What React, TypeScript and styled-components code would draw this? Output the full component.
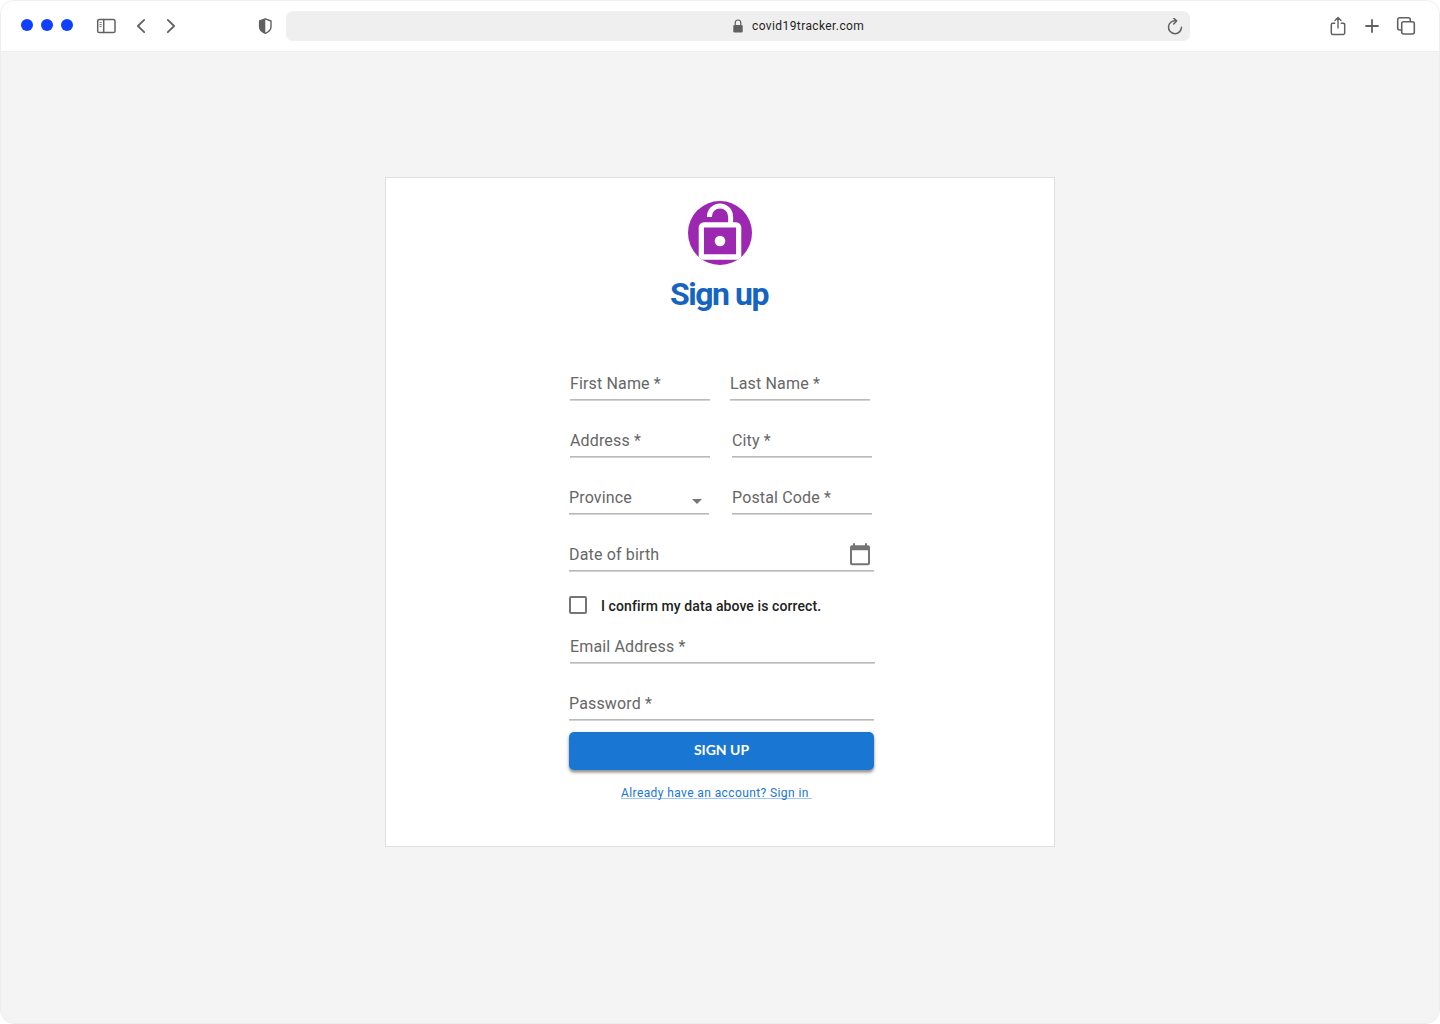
import React from "react";
import styled, { createGlobalStyle } from "styled-components";

const GlobalStyle = createGlobalStyle`
  *, *::before, *::after { box-sizing: border-box; }
  html, body { margin: 0; padding: 0; background: #fff; }
  body { font-family: Roboto, "Liberation Sans", sans-serif; }
  svg { display: block; flex: none; }
`;

const Browser = styled.div`
  width: 1440px;
  height: 1024px;
  display: flex;
  flex-direction: column;
  overflow: hidden;
  border: 1px solid #eeeeee;
  border-radius: 14px;
  background: #f4f4f4;
`;

const Toolbar = styled.header`
  height: 51px;
  flex: none;
  display: flex;
  align-items: center;
  padding: 0 0 1px 20px;
  background: #fff;
  border-bottom: 1px solid #eeeeee;
`;

const Lights = styled.div`
  display: flex;
  gap: 8px;
  margin-right: 23px;
  margin-bottom: 1px;
`;

const Light = styled.span`
  width: 12px;
  height: 12px;
  border-radius: 50%;
  background: #0f3fff;
`;

const ToolIcon = styled.svg<{ $gap?: number }>`
  margin-right: ${(p) => p.$gap ?? 0}px;
  margin-top: 1px;
  fill: none;
  stroke: #616161;
  stroke-width: 1.5;
  stroke-linecap: round;
  stroke-linejoin: round;
`;

const AddressBar = styled.div`
  width: 904px;
  height: 30px;
  margin-right: 138.5px;
  margin-top: 1px;
  padding: 0 6.5px 0 447px;
  display: flex;
  align-items: center;
  border-radius: 7px;
  background: #efefef;
`;

const Url = styled.span`
  flex: 1;
  margin-left: 9px;
  font-size: 12px;
  line-height: 16px;
  letter-spacing: 0.4px;
  color: #1f1f1f;
`;

const Page = styled.main`
  flex: 1;
  padding-top: 125px;
  display: flex;
  justify-content: center;
  align-items: flex-start;
`;

const Card = styled.section`
  width: 670px;
  height: 670px;
  display: flex;
  flex-direction: column;
  align-items: center;
  padding-top: 23px;
  border: 1px solid #e0e0e0;
  background: #fff;
`;

const Title = styled.h1`
  margin: 9px 2px 0 0;
  font-size: 32px;
  line-height: 40px;
  font-weight: 700;
  letter-spacing: -1.5px;
  color: #1565c0;
`;

const Form = styled.form`
  width: 306px;
  margin: 55px 0 0 4px;
  display: flex;
  flex-direction: column;
`;

const Row = styled.div<{ $indent?: number; $gap?: number }>`
  display: flex;
  gap: ${(p) => p.$gap ?? 0}px;
  margin: 0 0 25px ${(p) => p.$indent ?? 0}px;
`;

const Field = styled.label<{ $wide?: boolean }>`
  width: ${(p) => (p.$wide ? 305 : 140)}px;
  height: 32px;
  display: flex;
  justify-content: space-between;
  border-bottom: 1px solid #d3d3d3;
  box-shadow: inset 0 -1px 0 #b9b9b9;
  font-size: 16px;
  line-height: 29px;
  letter-spacing: 0.15px;
  color: #666;
`;

const SelectArrow = styled.svg`
  margin: 16px 7px 0 0;
  fill: #757575;
`;

const CalendarIcon = styled.svg`
  margin: 3px 4px 0 0;
`;

const Confirm = styled.label`
  height: 20px;
  margin: -2px 0 17px;
  display: flex;
  align-items: center;
  gap: 14px;
  font-size: 14px;
  line-height: 18px;
  font-weight: 500;
  letter-spacing: 0.09px;
  color: #212121;
`;

const ConfirmText = styled.span`
  padding-top: 1px;
`;

const Checkbox = styled.span`
  width: 18px;
  height: 18px;
  border: 2px solid #757575;
  border-radius: 2px;
`;

const Submit = styled.button`
  width: 305px;
  height: 38px;
  margin-top: -14px;
  padding: 0 0 3px 0;
  border: 0;
  border-radius: 5px;
  background: #1976d2;
  box-shadow: 0 1px 5px rgba(0, 0, 0, 0.14), 0 2px 2px rgba(0, 0, 0, 0.14),
    0 3px 3px rgba(0, 0, 0, 0.24);
  font-family: Lato, sans-serif;
  font-size: 14px;
  font-weight: 700;
  letter-spacing: 0;
  color: #fff;
`;

const SignInLink = styled.a`
  align-self: flex-start;
  margin: 15px 0 0 52px;
  font-size: 12px;
  line-height: 16px;
  letter-spacing: 0.4px;
  white-space: pre;
  color: #1976d2;
  text-decoration: underline;
  text-decoration-color: #a3c8ed;
  text-decoration-skip-ink: none;
`;

export default function App() {
  return (
    <>
      <GlobalStyle />
      <Browser>
        <Toolbar>
          <Lights>
            <Light />
            <Light />
            <Light />
          </Lights>
          <ToolIcon width="20" height="16" viewBox="0 0 20 16" $gap={20}>
            <rect x="1.700" y="1.500" width="17.300" height="13" rx="1.600" />
            <path d="M7.700 1.500v13" />
            <path d="M3.900 4.500h1.400M3.900 6.500h1.400M3.900 8.500h1.400" strokeWidth="0.800" />
          </ToolIcon>
          <ToolIcon width="10" height="16" viewBox="0 0 10 16" $gap={20}>
            <path d="M8.200 1.900 1.900 8l6.300 6.100" strokeWidth="1.800" />
          </ToolIcon>
          <ToolIcon width="10" height="16" viewBox="0 0 10 16" $gap={82}>
            <path d="M1.800 1.900 8.100 8l-6.300 6.100" strokeWidth="1.800" />
          </ToolIcon>
          <ToolIcon width="14" height="16" viewBox="0 0 14 16" $gap={14}>
            <path d="M7.300 .8 13 3v6c0 3-2.400 4.900-5.700 6.300C4 13.900 1.600 12 1.600 9V3Z" strokeWidth="1.400" />
            <path d="M7.300 .8v14.500C4 13.900 1.600 12 1.600 9V3Z" fill="#616161" stroke="none" />
          </ToolIcon>
          <AddressBar>
            <svg width="10" height="14" viewBox="0 0 10 14">
              <rect x="0.300" y="6" width="9.400" height="7.500" rx="1.300" fill="#616161" />
              <path d="M2.200 6.500V4a2.800 3 0 0 1 5.600 0v2.500" fill="none" stroke="#616161" strokeWidth="1.200" />
            </svg>
            <Url>covid19tracker.com</Url>
            <ToolIcon width="18" height="18" viewBox="0 0 18 18">
              <path d="M9.600 2.700A6.500 6.500 0 1 0 15.500 9.200" strokeWidth="1.500" />
              <path d="M7.700.2l2.900 2.700-2.900 3" strokeWidth="1.500" />
            </ToolIcon>
          </AddressBar>
          <ToolIcon width="18" height="20" viewBox="0 0 18 20" $gap={18}>
            <path d="M5.700 7.200H3.800a1.500 1.500 0 0 0-1.500 1.500v8.300a1.500 1.500 0 0 0 1.500 1.500h10.400a1.500 1.500 0 0 0 1.500-1.500V8.700a1.500 1.500 0 0 0-1.500-1.500h-1.900" />
            <path d="M9 12V2M6 4.500l3-3 3 3" strokeWidth="1.400" />
          </ToolIcon>
          <ToolIcon width="14" height="14" viewBox="0 0 14 14" $gap={17}>
            <path d="M7 1v12M1 7h12" strokeWidth="1.800" />
          </ToolIcon>
          <ToolIcon width="20" height="20" viewBox="0 0 20 20">
            <rect x="5.700" y="5.700" width="12.600" height="12.300" rx="2" strokeWidth="1.600" />
            <path d="M5.500 14H3.700a2 2 0 0 1-2-2V3.700a2 2 0 0 1 2-2h8.600a2 2 0 0 1 2 2v1.800" strokeWidth="1.600" />
          </ToolIcon>
        </Toolbar>
        <Page>
          <Card>
            <svg width="64" height="64" viewBox="0 0 64 64">
              <defs>
                <clipPath id="badge">
                  <circle cx="32" cy="32" r="32" />
                </clipPath>
              </defs>
              <circle cx="32" cy="32" r="32" fill="#9c27b0" />
              <g clipPath="url(#badge)">
                <path d="M21.400 16v-.500a10.600 10.600 0 0 1 21.200 0V24" fill="none" stroke="#fff" strokeWidth="5" />
                <path
                  d="M16 21.300h32a5.300 5.300 0 0 1 5.300 5.300V58.700H10.700V26.600A5.300 5.300 0 0 1 16 21.300ZM16 26.600v26.700h32V26.600Z"
                  fill="#fff"
                  fillRule="evenodd"
                />
              </g>
              <circle cx="32" cy="40" r="5.300" fill="#fff" />
            </svg>
            <Title>Sign up</Title>
            <Form>
              <Row $indent={1} $gap={20}>
                <Field>First Name *</Field>
                <Field>Last Name *</Field>
              </Row>
              <Row $indent={1} $gap={22}>
                <Field>Address *</Field>
                <Field>City *</Field>
              </Row>
              <Row $gap={23}>
                <Field>
                  Province
                  <SelectArrow width="10" height="5" viewBox="0 0 10 5">
                    <path d="M0 0h10L5 5Z" />
                  </SelectArrow>
                </Field>
                <Field>Postal Code *</Field>
              </Row>
              <Row>
                <Field $wide>
                  Date of birth
                  <CalendarIcon width="20" height="23" viewBox="0 0 20 23">
                    <path
                      d="M18 2.300h-1V.3h-2v2H5v-2H3v2H2c-1.100 0-2 .9-2 2v16c0 1.100.9 2 2 2h16c1.100 0 2-.9 2-2v-16c0-1.100-.9-2-2-2Zm0 18H2v-13h16Z"
                      fill="#757575"
                    />
                  </CalendarIcon>
                </Field>
              </Row>
              <Confirm>
                <Checkbox />
                <ConfirmText>I confirm my data above is correct.</ConfirmText>
              </Confirm>
              <Row $indent={1}>
                <Field $wide>Email Address *</Field>
              </Row>
              <Row>
                <Field $wide>Password *</Field>
              </Row>
              <Submit type="button">SIGN UP</Submit>
              <SignInLink>{"Already have an account? Sign in "}</SignInLink>
            </Form>
          </Card>
        </Page>
      </Browser>
    </>
  );
}
